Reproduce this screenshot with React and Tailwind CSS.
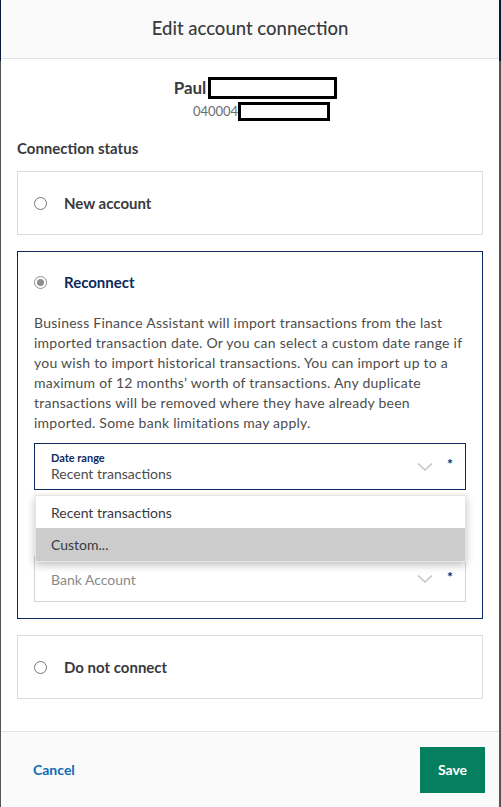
import { useState } from "react";

function Radio({ checked }) {
  return (
    <span
      className={
        "flex h-[13px] w-[13px] shrink-0 items-center justify-center rounded-full border " +
        (checked ? "border-[#8d8d8d]" : "border-[#767676]")
      }
    >
      {checked && <span className="h-[7px] w-[7px] rounded-full bg-[#8d8d8d]" />}
    </span>
  );
}

function Chevron() {
  return (
    <svg width="16" height="10" viewBox="0 0 16 10" fill="none">
      <path d="M1 1.5 L8 8 L15 1.5" stroke="#c4c4c4" strokeWidth="1.6" />
    </svg>
  );
}

function Option({ label }) {
  return (
    <div className="border border-[#dcdcdc] px-[16px] py-[21px]">
      <div className="flex h-5 items-center gap-[17px]">
        <Radio />
        <span className="text-[15px] font-bold text-[#393a3d]">{label}</span>
      </div>
    </div>
  );
}

function Edge({ w }) {
  return (
    <div className={"flex shrink-0 flex-col " + w}>
      <div className="h-[61px] bg-[#0b1c3a]" />
      <div className="flex-1 bg-[#555]" />
    </div>
  );
}

export default function App() {
  const [range] = useState("Recent transactions");

  return (
    <div className="flex h-[807px] w-[501px] overflow-hidden bg-[#555]" style={{ fontFamily: "Lato, 'Open Sans', sans-serif" }}>
      <Edge w="w-px" />
      <div className="flex w-[498px] flex-col bg-white">
        <div className="flex h-[59px] shrink-0 items-center justify-center border-b border-[#e3e3e3] bg-[#fafafa]">
          <h1 className="text-[18.5px] font-medium text-[#393a3d]">Edit account connection</h1>
        </div>

        <div className="flex flex-1 flex-col px-[16px]">
          <div className="mt-[16px] flex items-center justify-center pl-[11px]">
            <span className="text-[17px] font-bold text-[#393a3d]">Paul</span>
            <span className="ml-[2px] h-[22px] w-[129px] border-[3px] border-black bg-white" />
          </div>
          <div className="mt-[1px] flex items-center justify-center pl-[23px]">
            <span className="text-[13px] text-[#6b6c72]">040004</span>
            <span className="h-[19px] w-[92px] border-[3px] border-black bg-white" />
          </div>

          <h2 className="mt-[17px] text-[15px] font-bold leading-5 text-[#393a3d]">Connection status</h2>

          <div className="mt-[13px] flex flex-col gap-4">
            <Option label="New account" />

            <div className="border border-[#0d2a5e] px-[16px] pb-[16px] pt-[20px]">
              <div className="flex h-5 items-center gap-[17px]">
                <Radio checked />
                <span className="text-[15px] font-bold text-[#0d2a5e]">Reconnect</span>
              </div>
              <p className="mt-[21px] text-[14px] leading-5 tracking-[0.25px] text-[#4d4d4d]">
                Business Finance Assistant will import transactions from the last imported transaction date. Or you can
                select a custom date range if you wish to import historical transactions. You can import up to a maximum
                of 12 months’ worth of transactions. Any duplicate transactions will be removed where they have already
                been imported. Some bank limitations may apply.
              </p>

              <div className="relative mt-[10px]">
                <div className="flex h-[47px] items-center border border-[#0d2a5e] pl-[16px] pr-[12px]">
                  <div className="flex flex-1 flex-col">
                    <span className="text-[11px] font-bold leading-[14px] text-[#0d2a5e]">Date range</span>
                    <span className="text-[14px] leading-[18px] text-[#4d4d4d]">{range}</span>
                  </div>
                  <Chevron />
                  <span className="ml-[14px] -mt-[6px] text-[14px] font-bold text-[#0d2a5e]">*</span>
                </div>

                <div className="mt-[66px] flex h-[46px] items-center border border-[#d4d4d4] pl-[16px] pr-[12px]">
                  <span className="flex-1 text-[14px] text-[#8a8a8a]">Bank Account</span>
                  <Chevron />
                  <span className="ml-[14px] -mt-[6px] text-[14px] font-bold text-[#0d2a5e]">*</span>
                </div>

                <div className="absolute left-px right-0 top-[52px] border border-[#e6e6e6] bg-white shadow-[0_3px_8px_rgba(0,0,0,0.25)]">
                  <div className="flex h-[32px] items-center px-[15px] text-[14px] text-[#393a3d]">Recent transactions</div>
                  <div className="flex h-[33px] items-center bg-[#cccccc] px-[15px] text-[14px] text-[#393a3d]">Custom...</div>
                </div>
              </div>
            </div>

            <Option label="Do not connect" />
          </div>
        </div>

        <div className="flex h-[76px] shrink-0 items-center justify-between border-t border-[#e3e3e3] bg-[#fafafa] pl-[32px] pr-[14px]">
          <button className="text-[14px] font-bold text-[#0d6ab8]">Cancel</button>
          <button className="h-[46px] w-[65px] bg-[#048060] text-[14px] font-bold text-white">Save</button>
        </div>
      </div>
      <Edge w="w-[2px]" />
    </div>
  );
}
